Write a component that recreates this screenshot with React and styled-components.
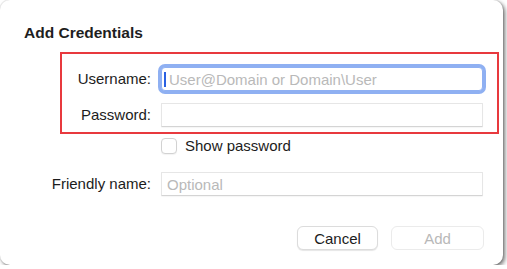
import styled, { createGlobalStyle } from "styled-components";

const GlobalStyle = createGlobalStyle`
   html, body {
      margin: 0;
      padding: 0;
      background: #ffffff;
   }

   body {
      font-family: "Liberation Sans", Arial, sans-serif;
      color: #222222;
   }
`;

export default function App() {
   return (
      <>
         <GlobalStyle />
         <Dialog>
            <Title>Add Credentials</Title>

            <Highlight>
               <Row labelWidth={89}>
                  <Label>Username:</Label>
                  <Field focused>
                     <Caret />
                     <Input placeholder="User@Domain or Domain\User" />
                  </Field>
               </Row>
               <Row labelWidth={89} top={12}>
                  <Label>Password:</Label>
                  <Field>
                     <Input type="password" />
                  </Field>
               </Row>
            </Highlight>

            <CheckRow>
               <Checkbox type="checkbox" />
               <CheckText>Show password</CheckText>
            </CheckRow>

            <Row labelWidth={127} top={17}>
               <Label>Friendly name:</Label>
               <Field>
                  <Input placeholder="Optional" />
               </Field>
            </Row>

            <Footer>
               <Button width={81}>Cancel</Button>
               <Button width={93} disabled>
                  Add
               </Button>
            </Footer>
         </Dialog>
      </>
   );
}

const Dialog = styled.div`
   width: 503px;
   height: 265px;
   box-sizing: border-box;
   padding: 24px 0 0 24px;
   background: #ffffff;
   border-radius: 10px;
   box-shadow: 0 0 0 1px rgba(0, 0, 0, 0.06), 2px 2px 4px rgba(0, 0, 0, 0.55);
   display: flex;
   flex-direction: column;
`;

const Title = styled.h2`
   margin: 0;
   font-size: 15.5px;
   line-height: 18px;
   font-weight: 700;
   color: #1e1e1e;
`;

const Highlight = styled.div`
   margin: 10px 0 0 36px;
   width: 439px;
   box-sizing: border-box;
   border: 2px solid #e8393e;
   padding: 13px 14px 5px 0;
`;

const Row = styled.div`
   display: grid;
   grid-template-columns: ${(props) => props.labelWidth}px 322px;
   column-gap: 10px;
   align-items: center;
   margin-top: ${(props) => props.top || 0}px;
`;

const Label = styled.label`
   text-align: right;
   white-space: nowrap;
   font-size: 15px;
   line-height: 18px;
   color: #1c1c1c;
`;

const Field = styled.div`
   height: 24px;
   box-sizing: border-box;
   display: flex;
   align-items: center;
   padding-left: ${(props) => (props.focused ? 2 : 5)}px;
   background: #ffffff;
   border: 1px solid ${(props) => (props.focused ? "#8fb0f2" : "#e6e6e6")};
   border-bottom-color: ${(props) => (props.focused ? "#8fb0f2" : "#d4d4d4")};
   border-radius: ${(props) => (props.focused ? "4px" : "1px")};
   box-shadow: ${(props) =>
      props.focused ? "0 0 0 3px #8fb0f2" : "0 1px 1px rgba(0, 0, 0, 0.04)"};
`;

const Caret = styled.span`
   width: 2px;
   height: 15px;
   margin-right: 3px;
   background: #2a61e2;
   flex-shrink: 0;
`;

const Input = styled.input`
   flex: 1;
   min-width: 0;
   border: none;
   outline: none;
   padding: 0;
   background: transparent;
   font-family: "Liberation Sans", Arial, sans-serif;
   font-size: 15px;
   color: #222222;

   &::placeholder {
      color: #b9b9b9;
      opacity: 1;
   }
`;

const CheckRow = styled.div`
   display: flex;
   align-items: center;
   gap: 8px;
   margin: 3px 0 0 137px;
`;

const Checkbox = styled.input`
   appearance: none;
   margin: 0;
   width: 16px;
   height: 16px;
   box-sizing: border-box;
   border: 1px solid #d2d2d2;
   border-radius: 4px;
   background: #ffffff;
   box-shadow: 0 1px 1px rgba(0, 0, 0, 0.05);
`;

const CheckText = styled.span`
   font-size: 15px;
   line-height: 18px;
   color: #1c1c1c;
`;

const Footer = styled.div`
   display: flex;
   justify-content: flex-end;
   gap: 13px;
   margin-top: 30px;
   padding-right: 19px;
`;

const Button = styled.button`
   width: ${(props) => props.width}px;
   height: 24px;
   box-sizing: border-box;
   padding: 0;
   font-family: "Liberation Sans", Arial, sans-serif;
   font-size: 15px;
   color: #1c1c1c;
   background: #ffffff;
   border: 1px solid #dcdcdc;
   border-radius: 6px;
   box-shadow: 0 1px 1px rgba(0, 0, 0, 0.1);

   &:disabled {
      color: #b8b8b8;
      border-color: #ebebeb;
      box-shadow: none;
   }
`;
